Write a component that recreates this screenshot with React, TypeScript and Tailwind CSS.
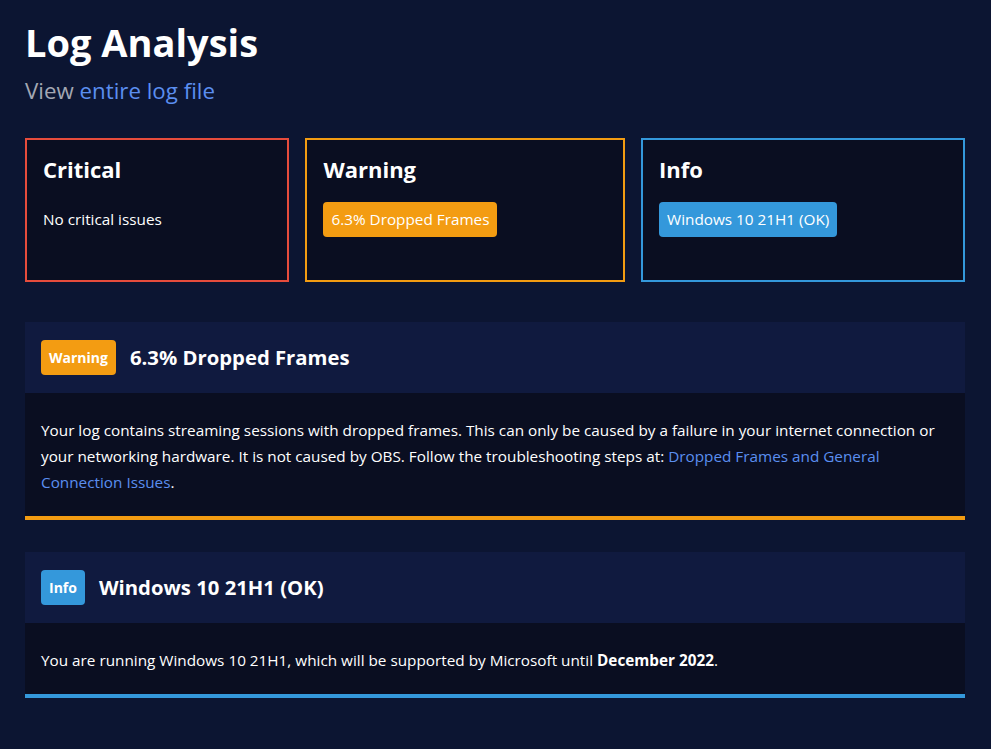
import React from 'react';

const font = { fontFamily: '"Open Sans", "Noto Sans", sans-serif' };

// Summary cards along the top
function SummaryCard({ title, border, children }: { title: string; border: string; children: React.ReactNode }) {
    return (
        <div className={`flex-auto h-[144px] border-2 ${border} bg-[#0a0e21] px-4 pt-[14px]`}>
            <h2 className="text-[22px] font-bold leading-[30px] text-white">{title}</h2>
            <div className="mt-[18px] flex items-center h-[35px]">{children}</div>
        </div>
    );
}

function Pill({ color, children }: { color: string; children: React.ReactNode }) {
    return (
        <span className={`${color} text-white text-[15.3px] leading-[35px] h-[35px] px-2 rounded-[4px] whitespace-nowrap`}>{children}</span>
    );
}

function Section({ tag, tagColor, title, bar, children }: { tag: string; tagColor: string; title: string; bar: string; children: React.ReactNode }) {
    return (
        <div className={`border-b-4 ${bar}`}>
            <div className="flex items-center gap-[14px] bg-[#101a3f] h-[71px] px-4">
                <span className={`${tagColor} text-white text-[14px] font-bold h-[35px] leading-[35px] px-[8px] rounded-[4px]`}>{tag}</span>
                <h3 className="text-[20.3px] font-bold text-white">{title}</h3>
            </div>
            <div className="bg-[#0a0e21] px-4 pt-[24px] pb-[21px] text-[15.3px] leading-[26px] text-white">{children}</div>
        </div>
    );
}

export default function App() {
    return (
        <div style={font} className="min-h-[749px] bg-[#0c1532] pl-[25px] pr-[26px] pt-[14px] pb-10">
            <h1 className="text-[38px] font-bold leading-[56px] text-white">Log Analysis</h1>
            <p className="mt-[6px] text-[22.3px] leading-[30px] text-[#a3a7b3]">
                View <a className="text-[#5b8ef0]">entire log file</a>
            </p>

            <div className="mt-[32px] flex gap-4">
                <SummaryCard title="Critical" border="border-[#e74c3c]">
                    <span className="text-[15.3px] text-white">No critical issues</span>
                </SummaryCard>
                <SummaryCard title="Warning" border="border-[#f39c12]">
                    <Pill color="bg-[#f39c12]">6.3% Dropped Frames</Pill>
                </SummaryCard>
                <SummaryCard title="Info" border="border-[#3498db]">
                    <Pill color="bg-[#3498db]">Windows 10 21H1 (OK)</Pill>
                </SummaryCard>
            </div>

            <div className="mt-10 flex flex-col gap-[32px]">
                <Section tag="Warning" tagColor="bg-[#f39c12]" title="6.3% Dropped Frames" bar="border-[#f39c12]">
                    Your log contains streaming sessions with dropped frames. This can only be caused by a failure in your internet connection or
                    your networking hardware. It is not caused by OBS. Follow the troubleshooting steps at:{' '}
                    <a className="text-[#5b8ef0]">Dropped Frames and General Connection Issues</a>.
                </Section>
                <Section tag="Info" tagColor="bg-[#3498db]" title="Windows 10 21H1 (OK)" bar="border-[#3498db]">
                    You are running Windows 10 21H1, which will be supported by Microsoft until <b className="font-bold">December 2022</b>.
                </Section>
            </div>
        </div>
    );
}
